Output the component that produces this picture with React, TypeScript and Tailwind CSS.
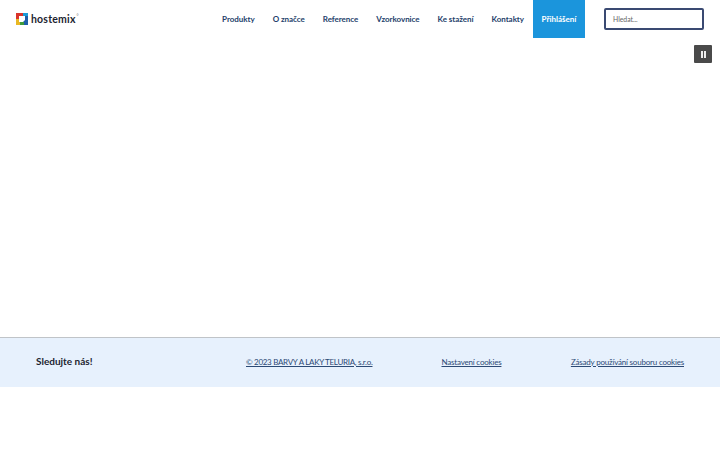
const NAV = ['Produkty', 'O značce', 'Reference', 'Vzorkovnice', 'Ke stažení', 'Kontakty'];

function Logo() {
  return (
    <div className="flex items-center">
      <svg width="12" height="12" viewBox="0 0 12 12" aria-hidden>
        <rect width="12" height="12" fill="#1d5fa8" />
        <path d="M0 0h7v3H3v3H0z" fill="#d9342b" />
        <path d="M7 0h5v3H7z" fill="#1a9ad6" />
        <path d="M0 6h3v2h1v4H0z" fill="#e9b824" />
        <path d="M4 12V9h4v3z" fill="#3f9b3a" />
        <path d="M3 3h6v4L7 9H3z" fill="#fff" />
      </svg>
      <span className="ml-[3px] text-[10.5px] leading-none font-bold tracking-[0.2px] text-[#1c2430]">hostemix</span>
      <span className="mb-[6px] ml-[1px] text-[5px] leading-none text-[#777]">°</span>
    </div>
  );
}

export default function App() {
  return (
    <div className="flex h-[450px] w-[720px] flex-col bg-white font-['Lato','Noto_Sans',sans-serif]">
      <header className="flex h-[38px] items-start pl-4">
        <div className="flex h-[38px] items-center">
          <Logo />
        </div>
        <nav className="ml-auto flex h-[38px] items-center gap-[18px]">
          {NAV.map((item) => (
            <a key={item} className="text-[8px] font-bold tracking-[-0.04px] text-[#24416b]">
              {item}
            </a>
          ))}
          <a className="-ml-[9px] flex h-[38px] w-[52px] items-center justify-center bg-[#1b95dc] text-[8px] font-bold text-white">
            Přihlášení
          </a>
        </nav>
        <div className="mt-2 mr-4 ml-[19px] flex h-[22px] w-[100px] items-center rounded-[2px] border-2 border-[#3a4a72] pl-[7px] text-[6.8px] text-[#666]">
          Hledat...
        </div>
      </header>

      <main className="relative h-[299px]">
        <button
          type="button"
          aria-label="Pause"
          className="absolute top-[7px] right-2 flex h-[18px] w-[18px] items-center justify-center gap-px rounded-[1px] bg-[#4a4a4a]"
        >
          <span className="h-[7px] w-[2px] bg-[#eee]" />
          <span className="h-[7px] w-[2px] bg-[#eee]" />
        </button>
      </main>

      <footer className="flex h-[50px] items-center border-t border-[#c0c4c8] bg-[#e7f1fd] px-9 pb-[2px]">
        <span className="w-[210px] text-[10px] font-bold text-[#1c2430]">Sledujte nás!</span>
        <a className="text-[8px] tracking-[-0.3px] text-[#2c4a75] underline">© 2023 BARVY A LAKY TELURIA, s.r.o.</a>
        <a className="ml-[69px] text-[8px] tracking-[-0.2px] text-[#2c4a75] underline">Nastavení cookies</a>
        <a className="ml-auto text-[8px] tracking-[-0.2px] text-[#2c4a75] underline">Zásady používání souboru cookies</a>
      </footer>
    </div>
  );
}
